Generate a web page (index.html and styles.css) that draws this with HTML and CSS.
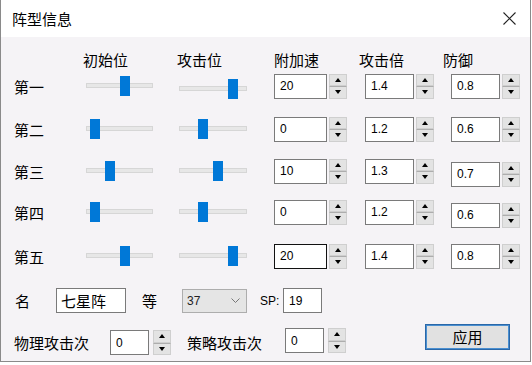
FILE: index.html
```html
<!DOCTYPE html>
<html lang="zh">
<head>
  <meta charset="UTF-8">
  <title>阵型信息</title>
  <link rel="stylesheet" href="styles.css">
</head>
<body>

<div class="window">
  <div class="titlebar">
    <span>阵型信息</span>
    <svg class="close" width="13" height="13" viewBox="0 0 13 13">
      <path d="M0.5 0.5 L12.5 12.5 M12.5 0.5 L0.5 12.5" stroke="#222" stroke-width="1.1" fill="none"/>
    </svg>
  </div>

  <div class="content">
    <div class="grid">
      <div></div>
      <div class="hd shift-3">初始位</div>
      <div class="hd shift-2">攻击位</div>
      <div class="hd">附加速</div>
      <div class="hd shift-6">攻击倍</div>
      <div class="hd shift-8">防御</div>

      <div class="cell label">第一</div>
      <div class="cell"><div class="slider"><div class="track"></div><div class="thumb" style="left:34px"></div></div></div>
      <div class="cell"><div class="slider wide low"><div class="track"></div><div class="thumb" style="left:49px"></div></div></div>
      <div class="cell"><div class="spin"><input class="box" value="20"><div class="arrows"><span class="up"></span><span class="dn"></span></div></div></div>
      <div class="cell"><div class="spin"><input class="box narrow" value="1.4"><div class="arrows"><span class="up"></span><span class="dn"></span></div></div></div>
      <div class="cell"><div class="spin"><input class="box narrow" value="0.8"><div class="arrows"><span class="up"></span><span class="dn"></span></div></div></div>

      <div class="cell label">第二</div>
      <div class="cell"><div class="slider"><div class="track"></div><div class="thumb" style="left:4px"></div></div></div>
      <div class="cell"><div class="slider wide"><div class="track"></div><div class="thumb" style="left:19px"></div></div></div>
      <div class="cell"><div class="spin"><input class="box" value="0"><div class="arrows"><span class="up"></span><span class="dn"></span></div></div></div>
      <div class="cell"><div class="spin"><input class="box narrow" value="1.2"><div class="arrows"><span class="up"></span><span class="dn"></span></div></div></div>
      <div class="cell"><div class="spin"><input class="box narrow" value="0.6"><div class="arrows"><span class="up"></span><span class="dn"></span></div></div></div>

      <div class="cell label">第三</div>
      <div class="cell"><div class="slider"><div class="track"></div><div class="thumb" style="left:19px"></div></div></div>
      <div class="cell"><div class="slider wide"><div class="track"></div><div class="thumb" style="left:34px"></div></div></div>
      <div class="cell"><div class="spin"><input class="box" value="10"><div class="arrows"><span class="up"></span><span class="dn"></span></div></div></div>
      <div class="cell"><div class="spin"><input class="box narrow" value="1.3"><div class="arrows"><span class="up"></span><span class="dn"></span></div></div></div>
      <div class="cell"><div class="spin low"><input class="box narrow" value="0.7"><div class="arrows"><span class="up"></span><span class="dn"></span></div></div></div>

      <div class="cell label">第四</div>
      <div class="cell"><div class="slider"><div class="track"></div><div class="thumb" style="left:4px"></div></div></div>
      <div class="cell"><div class="slider wide"><div class="track"></div><div class="thumb" style="left:19px"></div></div></div>
      <div class="cell"><div class="spin"><input class="box" value="0"><div class="arrows"><span class="up"></span><span class="dn"></span></div></div></div>
      <div class="cell"><div class="spin"><input class="box narrow" value="1.2"><div class="arrows"><span class="up"></span><span class="dn"></span></div></div></div>
      <div class="cell"><div class="spin low"><input class="box narrow" value="0.6"><div class="arrows"><span class="up"></span><span class="dn"></span></div></div></div>

      <div class="cell label">第五</div>
      <div class="cell"><div class="slider"><div class="track"></div><div class="thumb" style="left:34px"></div></div></div>
      <div class="cell"><div class="slider wide"><div class="track"></div><div class="thumb" style="left:49px"></div></div></div>
      <div class="cell"><div class="spin"><input class="box focus" value="20"><div class="arrows"><span class="up"></span><span class="dn"></span></div></div></div>
      <div class="cell"><div class="spin"><input class="box narrow" value="1.4"><div class="arrows"><span class="up"></span><span class="dn"></span></div></div></div>
      <div class="cell"><div class="spin"><input class="box narrow" value="0.8"><div class="arrows"><span class="up"></span><span class="dn"></span></div></div></div>
    </div>

    <div class="footer-row first">
      <span class="flabel name-label">名</span>
      <input class="box cn name-box" value="七星阵">
      <span class="flabel level-label">等</span>
      <div class="combo">
        <span>37</span>
        <svg width="9" height="5" viewBox="0 0 9 5"><path d="M0.5 0.5 L4.5 4.5 L8.5 0.5" stroke="#777" fill="none"/></svg>
      </div>
      <span class="flabel sp-label">SP:</span>
      <input class="box small" value="19">
    </div>

    <div class="footer-row second">
      <span class="flabel count-label">物理攻击次</span>
      <div class="spin wide-gap"><input class="box small" value="0"><div class="arrows"><span class="up"></span><span class="dn"></span></div></div>
      <span class="flabel count-label second-count">策略攻击次</span>
      <div class="spin wide-gap raised"><input class="box small" value="0"><div class="arrows"><span class="up"></span><span class="dn"></span></div></div>
      <button class="apply">应用</button>
    </div>
  </div>
</div>

</body>
</html>
```

FILE: styles.css
```css
body {
  margin: 0;
  background-color: #fff;
  color: #000;
  font-family: "Noto Sans CJK SC", "Noto Sans", sans-serif;
}
.window {
  width: 529px;
  height: 361px;
  border: 1px solid #8a8a8a;
  border-top: none;
  background-color: #f5f3f6;
}
.titlebar {
  height: 37px;
  background-color: #fff;
  display: flex;
  align-items: center;
  padding-left: 11px;
  font-size: 15px;
  line-height: 20px;
}
.close {
  margin-left: auto;
  margin-right: 14px;
}
.content {
  padding: 13px 0 0 13px;
}
.grid {
  display: grid;
  grid-template-columns: 72px 93px 95px 91px 86px 80px;
  grid-template-rows: 23px 43px 42px 41px 44px 26px;
  align-items: start;
}
.hd {
  font-size: 15px;
  line-height: 20px;
}
.shift-2 { margin-left: -2px; }
.shift-3 { margin-left: -3px; }
.shift-6 { margin-left: -6px; }
.shift-8 { margin-left: -8px; }
.cell {
  height: 26px;
  display: flex;
  align-items: center;
}
.label {
  font-size: 15px;
  line-height: 20px;
  padding-top: 1px;
}
.slider {
  position: relative;
  width: 67px;
  height: 20px;
}
.slider.wide {
  width: 68px;
}
.low {
  margin-top: 6px;
}
.track {
  position: absolute;
  left: 0;
  right: 0;
  top: 7px;
  height: 3px;
  background-color: #e7e7e7;
  border: 1px solid #d6d6d6;
}
.thumb {
  position: absolute;
  top: 0;
  width: 10px;
  height: 20px;
  background-color: #0078d7;
}
.spin {
  display: flex;
  gap: 2px;
}
.spin.wide-gap {
  gap: 4px;
}
.box {
  width: 53px;
  height: 25px;
  box-sizing: border-box;
  margin: 0;
  border: 1px solid #7a7a7a;
  background-color: #fff;
  padding: 0 0 0 5px;
  font-family: "Liberation Sans", Arial, sans-serif;
  font-size: 12px;
  color: #000;
  outline: none;
}
.box.narrow {
  width: 49px;
}
.box.small {
  width: 39px;
}
.box.focus {
  border-color: #111;
}
.box.cn {
  font-family: "Noto Sans CJK SC", sans-serif;
  font-size: 15px;
  padding-left: 4px;
}
.arrows {
  width: 18px;
  height: 25px;
  display: flex;
  flex-direction: column;
}
.arrows span {
  flex: 1;
  position: relative;
  background-color: #e3e3e3;
  border: 1px solid #cfcfcf;
}
.arrows span.dn {
  border-top-color: #adadad;
}
.arrows span::after {
  content: "";
  position: absolute;
  left: 5px;
  top: 3px;
  border-left: 3px solid transparent;
  border-right: 3px solid transparent;
}
.arrows span.up::after {
  border-bottom: 4px solid #000;
}
.arrows span.dn::after {
  border-top: 4px solid #000;
}
.footer-row {
  display: flex;
  align-items: center;
  font-size: 15px;
  line-height: 20px;
}
.footer-row.first {
  margin-top: 19px;
  height: 25px;
}
.footer-row.second {
  margin-top: 17px;
  height: 25px;
}
.flabel {
  flex: none;
}
.name-label {
  width: 41px;
  padding-left: 1px;
}
.name-box {
  width: 70px;
}
.level-label {
  width: 40px;
  margin-left: 16px;
}
.combo {
  width: 65px;
  height: 24px;
  box-sizing: border-box;
  border: 1px solid #adadad;
  background-color: #e5e5e5;
  display: flex;
  align-items: center;
  justify-content: space-between;
  padding: 0 6px 0 4px;
  font-family: "Liberation Sans", Arial, sans-serif;
  font-size: 12px;
  color: #222;
}
.sp-label {
  width: 23px;
  margin-left: 13px;
  font-family: "Liberation Sans", Arial, sans-serif;
  font-size: 12px;
}
.count-label {
  width: 96px;
}
.second-count {
  width: 98px;
  margin-left: 16px;
}
.raised {
  margin-top: -4px;
}
.apply {
  margin-left: auto;
  margin-right: 20px;
  margin-top: -12px;
  width: 85px;
  height: 26px;
  border: 1px solid #2a67a8;
  box-shadow: inset 0 0 0 1px #4a8fd0;
  background-color: #e1e1e1;
  font-family: "Noto Sans CJK SC", sans-serif;
  font-size: 15px;
  line-height: 20px;
  padding: 0;
  color: #000;
}
```
